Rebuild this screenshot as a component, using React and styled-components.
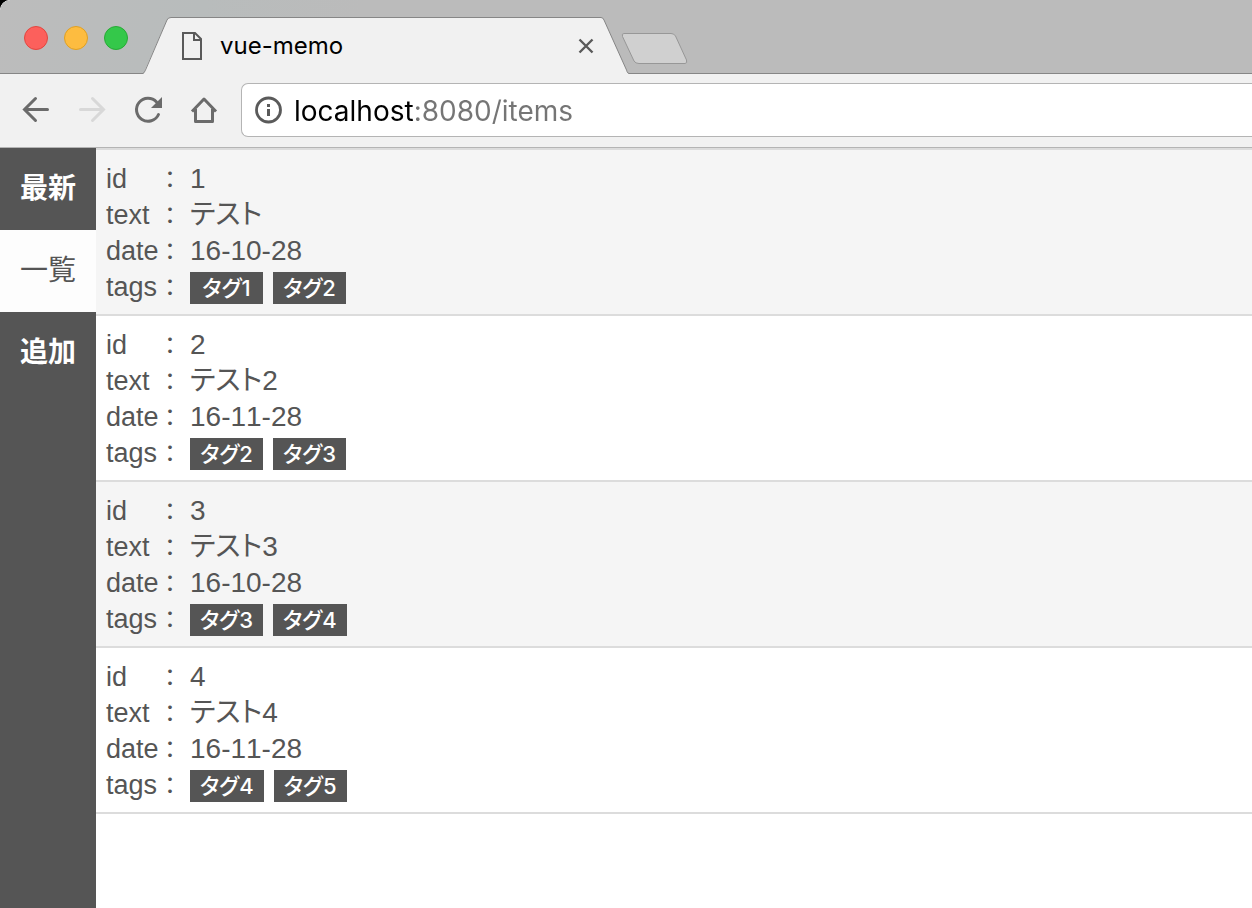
import React from "react";
import styled, { createGlobalStyle } from "styled-components";

const GlobalStyle = createGlobalStyle`
  * { box-sizing: border-box; }
  html { background: #000; }
  body { margin: 0; background: #fff; border-top-left-radius: 10px; }
  button { border: 0; padding: 0; background: none; font: inherit; }
  svg { display: block; flex: none; }
`;

const uiFont = `Inter, "Liberation Sans", sans-serif`;
const pageFont = `"Liberation Sans", "Noto Sans CJK JP", sans-serif`;

const Window = styled.div`
  display: flex;
  flex-direction: column;
  min-height: 100vh;
  overflow: hidden;
  border-top-left-radius: 10px;
  background: #fff;
`;

const TabStrip = styled.header`
  display: flex;
  align-items: flex-start;
  height: 74px;
  background: linear-gradient(100deg, #bcbcbc 0, #b8bcbc 200px, #bbb 360px);
  box-shadow: inset 0 -1px #868686;
`;

const Lights = styled.div`
  display: flex;
  gap: 16px;
  padding: 26px 15px 0 24px;
`;

const Light = styled.button`
  width: 24px;
  height: 24px;
  border: 1px solid ${(p) => p.$edge};
  border-radius: 50%;
  background: ${(p) => p.$fill};
`;

const Tab = styled.div`
  display: flex;
  height: 57px;
  margin-top: 17px;
`;

const TabBody = styled.div`
  display: flex;
  align-items: center;
  width: 430px;
  padding: 0 7px 0 10px;
  border-top: 1px solid #868686;
  background: #f1f1f1;
`;

const TabTitle = styled.span`
  flex: 1;
  padding-left: 17px;
  font: 24px/32px ${uiFont};
  color: #000;
`;

const NewTab = styled.button`
  margin: 33px 0 0 -8px;
`;

const Toolbar = styled.nav`
  display: flex;
  align-items: center;
  height: 74px;
  padding: 0 0 2px 20px;
  border-bottom: 1px solid #b4b4b4;
  background: #f1f1f1;
`;

const ToolButton = styled.button`
  width: 32px;
  height: 32px;
  margin-right: 24px;
  color: ${(p) => (p.disabled ? "#d8d8d8" : "#6b6b6b")};
`;

const AddressBar = styled.label`
  display: flex;
  align-items: center;
  flex: 1;
  height: 54px;
  margin-left: -3px;
  padding-left: 12px;
  border: 1px solid #b4b4b4;
  border-right: 0;
  border-radius: 7px 0 0 7px;
  background: #fff;
`;

const Address = styled.input`
  flex: 1;
  min-width: 0;
  height: 42px;
  margin-left: 11px;
  padding: 2px 0 0;
  border: 0;
  outline: 0;
  font: 28px/40px ${uiFont};
  color: #808080;
  -webkit-text-fill-color: transparent;
  background: linear-gradient(90deg, #000 120px, #757575 120px);
  -webkit-background-clip: text;
  background-clip: text;
`;

const Page = styled.div`
  display: flex;
  flex: 1;
  font-family: ${pageFont};
  font-feature-settings: "palt";
  font-kerning: none;
  color: #555;
`;

const Sidebar = styled.nav`
  width: 96px;
  flex: none;
  background: #555;
`;

const SideLink = styled.a`
  display: block;
  padding: 17px 0 23px;
  font-size: 28px;
  line-height: 42px;
  font-weight: ${(p) => (p.$active ? 400 : 700)};
  font-family: "Noto Sans CJK JP", sans-serif;
  font-feature-settings: normal;
  text-align: center;
  text-decoration: none;
  color: ${(p) => (p.$active ? "#555" : "#fff")};
  background: ${(p) => (p.$active ? "#fdfdfd" : "#555")};
`;

const List = styled.main`
  flex: 1;
  border-top: 2px solid #dcdcdc;
`;

const Item = styled.dl`
  margin: 0;
  padding: 10px;
  border-bottom: 2px solid #dcdcdc;
  background: #fff;
  &:nth-child(odd) { background: #f5f5f5; }
`;

const Field = styled.div`
  display: flex;
  height: 36px;
  font-size: 27px;
  line-height: 38px;
`;

const Name = styled.dt`
  display: flex;
  width: 84px;
`;

const Label = styled.span`
  width: 58px;
`;

const Colon = styled.span`
  font-family: "Noto Sans CJK JP", sans-serif;
  font-size: 24px;
  line-height: 36px;
`;

const Value = styled.dd`
  display: flex;
  align-items: flex-start;
  gap: 10px;
  margin: 0;
  font-size: 28px;
`;

const Tag = styled.span`
  height: 32px;
  margin-top: 4px;
  padding: 0 10px;
  background: #555;
  color: #fff;
  font-family: Inter, "Noto Sans CJK JP", sans-serif;
  font-size: 22px;
  line-height: 32px;
  font-weight: 500;
  text-align: center;
  min-width: 73px;
`;

const items = [
  { id: "1", text: "テスト", date: "16-10-28", tags: ["タグ1", "タグ2"] },
  { id: "2", text: "テスト2", date: "16-11-28", tags: ["タグ2", "タグ3"] },
  { id: "3", text: "テスト3", date: "16-10-28", tags: ["タグ3", "タグ4"] },
  { id: "4", text: "テスト4", date: "16-11-28", tags: ["タグ4", "タグ5"] },
];

const line = { fill: "none", stroke: "currentColor", strokeWidth: 3 };

function Row({ name, children }) {
  return (
    <Field>
      <Name>
        <Label>{name}</Label>
        <Colon>：</Colon>
      </Name>
      <Value>{children}</Value>
    </Field>
  );
}

export default function App() {
  return (
    <>
      <GlobalStyle />
      <Window>
        <TabStrip>
          <Lights>
            <Light aria-label="Close" $fill="#fc605c" $edge="#e2463f" />
            <Light aria-label="Minimize" $fill="#fdbc40" $edge="#dfa023" />
            <Light aria-label="Zoom" $fill="#34c84a" $edge="#27aa35" />
          </Lights>
          <Tab>
            <svg width="28" height="57" viewBox="0 0 28 57">
              <path d="M0 57C1 56 2 54 2 53L24 3Q25 .5 28 .5V57Z" fill="#f1f1f1" />
              <path d="M0 56.5C1 56 2 54 2.500 53L24 3Q25 .5 28 .5" fill="none" stroke="#868686" />
            </svg>
            <TabBody>
              <svg width="22" height="30" viewBox="0 0 22 30" fill="none" stroke="#5a5a5a" strokeWidth="2">
                <path d="M2 2H14L20 8V28H2Z M13 2V9H20" />
              </svg>
              <TabTitle>vue-memo</TabTitle>
              <button aria-label="Close tab">
                <svg width="16" height="16" viewBox="0 0 16 16" stroke="#5a5a5a" strokeWidth="2.400">
                  <path d="M1.500 1.500L14.500 14.500M14.500 1.500L1.500 14.500" />
                </svg>
              </button>
            </TabBody>
            <svg width="28" height="57" viewBox="0 0 28 57">
              <path d="M28 57C27 56 26 54 25.500 53L3 3Q2 .5 0 .5V57Z" fill="#f1f1f1" />
              <path d="M28 56.5C26 56 26 54 25.500 53L3 3Q2 .5 0 .5" fill="none" stroke="#868686" />
            </svg>
          </Tab>
          <NewTab aria-label="New tab">
            <svg width="68" height="33" viewBox="0 0 68 33">
              <path d="M3 .5H50Q53 .5 54.500 3L65.500 27Q66.500 30.500 64 30.500H18Q14.500 30.500 13 28L1.500 3.500Q.5 .5 3 .5Z" fill="#d0d0d0" stroke="#979797" />
            </svg>
          </NewTab>
        </TabStrip>
        <Toolbar>
          <ToolButton aria-label="Back">
            <svg width="32" height="32" viewBox="0 0 32 32" {...line} strokeLinecap="round">
              <path d="M27.500 15.500H5M15.500 4.500L4.500 15.500L15.500 26.500" />
            </svg>
          </ToolButton>
          <ToolButton aria-label="Forward" disabled>
            <svg width="32" height="32" viewBox="0 0 32 32" {...line} strokeLinecap="round">
              <path d="M4.500 15.500H27M16.500 4.500L27.500 15.500L16.500 26.500" />
            </svg>
          </ToolButton>
          <ToolButton aria-label="Reload">
            <svg width="32" height="32" viewBox="0 0 32 32" {...line} strokeLinecap="round">
              <path d="M24.500 8A11.500 11.500 0 1 0 26.500 20.500" />
              <path d="M30 3V14H19Z" fill="currentColor" stroke="none" />
            </svg>
          </ToolButton>
          <ToolButton aria-label="Home">
            <svg width="32" height="32" viewBox="0 0 32 32" {...line}>
              <path d="M4 17.500L16 5L28 17.500M7.500 15V27.500H24.500V15" strokeLinejoin="round" />
            </svg>
          </ToolButton>
          <AddressBar>
            <svg width="29" height="29" viewBox="0 0 29 29">
              <circle cx="14.500" cy="15" r="12" fill="none" stroke="#5a5a5a" strokeWidth="2.800" />
              <path d="M13 9H16V12H13ZM13 14H16V21H13Z" fill="#5a5a5a" />
            </svg>
            <Address aria-label="Address" defaultValue="localhost:8080/items" />
          </AddressBar>
        </Toolbar>
        <Page>
          <Sidebar>
            <SideLink href="#latest">最新</SideLink>
            <SideLink href="#items" $active>一覧</SideLink>
            <SideLink href="#add">追加</SideLink>
          </Sidebar>
          <List>
            {items.map((item) => (
              <Item key={item.id}>
                <Row name="id">{item.id}</Row>
                <Row name="text">{item.text}</Row>
                <Row name="date">{item.date}</Row>
                <Row name="tags">
                  {item.tags.map((tag) => <Tag key={tag}>{tag}</Tag>)}
                </Row>
              </Item>
            ))}
          </List>
        </Page>
      </Window>
    </>
  );
}
